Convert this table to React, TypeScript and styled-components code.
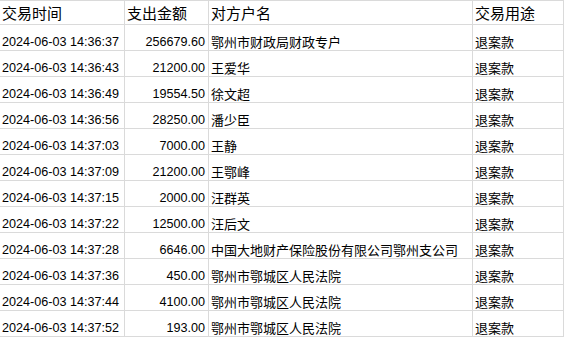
import React from 'react';
import styled, { createGlobalStyle } from 'styled-components';

const GlobalStyle = createGlobalStyle`
  html, body {
    margin: 0;
    padding: 0;
    background: #ffffff;
  }
  body {
    font-family: "Liberation Sans", "Noto Sans CJK SC", sans-serif;
    color: #000000;
    overflow: hidden;
  }
`;

const Sheet = styled.div`
  display: grid;
  grid-template-columns: 125px 84px 264px 1fr;
  width: 564px;
  border-top: 1px solid #dadada;
`;

const Cell = styled.div<{ $head?: boolean; $right?: boolean; $cjk?: boolean }>`
  box-sizing: border-box;
  height: ${(p) => (p.$head ? '24px' : '26px')};
  display: flex;
  align-items: flex-end;
  justify-content: ${(p) => (p.$right ? 'flex-end' : 'flex-start')};
  padding: 0 ${(p) => (p.$right ? '3px' : '0')} ${(p) => (p.$head ? '1px' : '0')} ${(p) => (p.$right ? '0' : '2px')};
  border-right: 1px solid #dadada;
  border-bottom: 1px solid #dadada;
  font-size: ${(p) => (p.$head ? '15px' : p.$cjk ? '13px' : '12.6px')};
  line-height: ${(p) => (p.$head ? '18px' : '15px')};
  white-space: nowrap;
  overflow: visible;
`;

interface Row {
  time: string;
  amount: string;
  name: string;
  usage: string;
}

const rows: Row[] = [
  { time: '2024-06-03 14:36:37', amount: '256679.60', name: '鄂州市财政局财政专户', usage: '退案款' },
  { time: '2024-06-03 14:36:43', amount: '21200.00', name: '王爱华', usage: '退案款' },
  { time: '2024-06-03 14:36:49', amount: '19554.50', name: '徐文超', usage: '退案款' },
  { time: '2024-06-03 14:36:56', amount: '28250.00', name: '潘少臣', usage: '退案款' },
  { time: '2024-06-03 14:37:03', amount: '7000.00', name: '王静', usage: '退案款' },
  { time: '2024-06-03 14:37:09', amount: '21200.00', name: '王鄂峰', usage: '退案款' },
  { time: '2024-06-03 14:37:15', amount: '2000.00', name: '汪群英', usage: '退案款' },
  { time: '2024-06-03 14:37:22', amount: '12500.00', name: '汪后文', usage: '退案款' },
  { time: '2024-06-03 14:37:28', amount: '6646.00', name: '中国大地财产保险股份有限公司鄂州支公司', usage: '退案款' },
  { time: '2024-06-03 14:37:36', amount: '450.00', name: '鄂州市鄂城区人民法院', usage: '退案款' },
  { time: '2024-06-03 14:37:44', amount: '4100.00', name: '鄂州市鄂城区人民法院', usage: '退案款' },
  { time: '2024-06-03 14:37:52', amount: '193.00', name: '鄂州市鄂城区人民法院', usage: '退案款' },
];

const App: React.FC = () => {
  return (
    <>
      <GlobalStyle />
      <Sheet>
        <Cell $head>交易时间</Cell>
        <Cell $head>支出金额</Cell>
        <Cell $head>对方户名</Cell>
        <Cell $head>交易用途</Cell>
        {rows.map((r, i) => (
          <React.Fragment key={i}>
            <Cell>{r.time}</Cell>
            <Cell $right>{r.amount}</Cell>
            <Cell $cjk>{r.name}</Cell>
            <Cell $cjk>{r.usage}</Cell>
          </React.Fragment>
        ))}
      </Sheet>
    </>
  );
};

export default App;
